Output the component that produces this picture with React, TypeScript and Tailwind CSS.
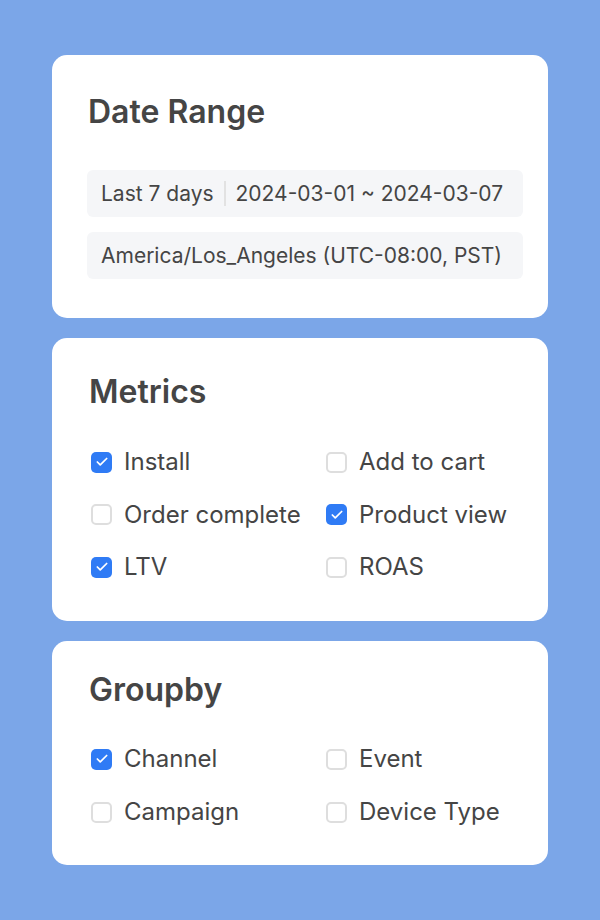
import { Check } from "lucide-react";

const metrics = [
  { label: "Install", checked: true },
  { label: "Add to cart", checked: false },
  { label: "Order complete", checked: false },
  { label: "Product view", checked: true },
  { label: "LTV", checked: true },
  { label: "ROAS", checked: false },
];

const groups = [
  { label: "Channel", checked: true },
  { label: "Event", checked: false },
  { label: "Campaign", checked: false },
  { label: "Device Type", checked: false },
];

export default function App() {
  return (
    <div className="min-h-[920px] w-[600px] bg-[#7ba6e8] px-[52px] pt-[55px] pb-[55px] font-['Inter',sans-serif] text-[#454545]">
      <div className="flex flex-col gap-[20px]">
        <section className="rounded-[15px] bg-white pl-[35px] pr-[25px] pt-[38px] pb-[39px]">
          <h2 className="pl-[1px] text-[32px] leading-[38px] font-semibold">Date Range</h2>
          <div className="mt-[39px] flex flex-col gap-[15px]">
            <div className="flex h-[47px] items-center rounded-[6px] bg-[#f5f6f8] px-[14px] text-[21px]">
              <span>Last 7 days</span>
              <span className="mx-[10px] h-[25px] w-[2px] bg-[#e2e2e2]" />
              <span>2024-03-01 ~ 2024-03-07</span>
            </div>
            <div className="flex h-[47px] items-center rounded-[6px] bg-[#f5f6f8] px-[14px] text-[21px]">
              America/Los_Angeles (UTC-08:00, PST)
            </div>
          </div>
        </section>

        <section className="rounded-[15px] bg-white px-[37px] pt-[35px] pb-[27px]">
          <h2 className="text-[32px] leading-[38px] font-semibold">Metrics</h2>
          <CheckGrid items={metrics} rowClass="h-[52.5px]" gridClass="mt-[25px]" />
        </section>

        <section className="rounded-[15px] bg-white px-[37px] pt-[30px] pb-[26px]">
          <h2 className="text-[32px] leading-[38px] font-semibold">Groupby</h2>
          <CheckGrid items={groups} rowClass="h-[53px]" gridClass="mt-[24px]" />
        </section>
      </div>
    </div>
  );
}

const CheckGrid = ({
  items,
  rowClass,
  gridClass,
}: {
  items: { label: string; checked: boolean }[];
  rowClass: string;
  gridClass: string;
}) => (
  <div className={`grid grid-cols-[235px_1fr] ${gridClass}`}>
    {items.map((item) => (
      <label key={item.label} className={`flex items-center gap-[12px] text-[24px] ${rowClass}`}>
        <span
          className={
            item.checked
              ? "ml-[2px] flex h-[21px] w-[21px] items-center justify-center rounded-[5px] bg-[#2f7bf5]"
              : "ml-[2px] h-[21px] w-[21px] rounded-[5px] border-2 border-[#dedede] bg-white"
          }
        >
          {item.checked && <Check className="h-[14px] w-[14px] text-white" strokeWidth={3} />}
        </span>
        <span>{item.label}</span>
      </label>
    ))}
  </div>
);
